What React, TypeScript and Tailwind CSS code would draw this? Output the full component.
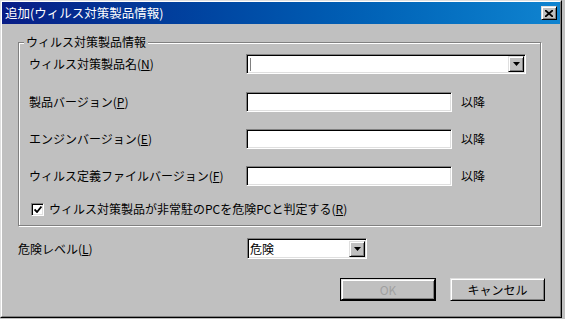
import React from "react";

const font = "font-['Noto_Sans_CJK_JP','Noto_Sans',sans-serif]";

const sunken =
    "border border-t-[#808080] border-l-[#808080] border-b-white border-r-white shadow-[inset_1px_1px_0_#000,inset_-1px_-1px_0_#dfdfdf] bg-white";
const raised =
    "border border-t-[#dfdfdf] border-l-[#dfdfdf] border-b-black border-r-black shadow-[inset_1px_1px_0_#fff,inset_-1px_-1px_0_#808080] bg-[#c0c0c0]";

function Mn({ label, k }: { label: string; k: string }) {
    return (
        <span>
            {label}(<span className="underline">{k}</span>)
        </span>
    );
}

function DropButton() {
    return (
        <div className={`${raised} w-[16px] h-[16px] flex items-center justify-center`}>
            <svg width="7" height="4" viewBox="0 0 7 4">
                <path d="M0 0h7L3.5 4z" fill="#000" />
            </svg>
        </div>
    );
}

function TextBox() {
    return <div className={`${sunken} w-[206px] h-[20px]`} />;
}

export default function App() {
    return (
        <div className={`w-[565px] h-[319px] bg-[#c0c0c0] text-[12px] text-black ${font}`}>
            {/* window frame */}
            <div className="w-[562px] h-[318px] border border-t-[#dfdfdf] border-l-[#dfdfdf] border-b-black border-r-black">
                <div className="h-full border border-t-white border-l-white border-b-[#808080] border-r-[#808080] flex flex-col">
                    {/* title bar */}
                    <div className="h-[22px] bg-gradient-to-r from-[#081c86] to-[#1084d0] flex items-center justify-between pl-[3px] pr-[3px]">
                        <span className="text-white text-[12.5px] leading-none">追加(ウィルス対策製品情報)</span>
                        <div className={`${raised} w-[16px] h-[14px] flex items-center justify-center`}>
                            <svg width="8" height="7" viewBox="0 0 8 7">
                                <path d="M0 0L8 7M8 0L0 7" stroke="#000" strokeWidth="1.8" />
                            </svg>
                        </div>
                    </div>

                    {/* body */}
                    <div className="flex flex-col pl-[16px] pt-[18px]">
                        {/* group box */}
                        <div className="relative w-[523px] h-[184px] border border-[#808080] shadow-[inset_1px_1px_0_#fff,1px_1px_0_#fff] pl-[10px] pt-[11px] flex flex-col">
                            <span className="absolute -top-[9px] left-[5px] bg-[#c0c0c0] px-[2px] leading-[16px]">
                                ウィルス対策製品情報
                            </span>

                            <div className="flex items-center h-[20px]">
                                <span className="w-[217px]">
                                    <Mn label="ウィルス対策製品名" k="N" />
                                </span>
                                <div className={`${sunken} w-[280px] h-[20px] flex items-center justify-between pl-[3px] pr-[1px]`}>
                                    <div className="w-[1px] h-[13px] bg-[#808080]" />
                                    <DropButton />
                                </div>
                            </div>

                            <div className="flex items-center h-[20px] mt-[18px]">
                                <span className="w-[217px]">
                                    <Mn label="製品バージョン" k="P" />
                                </span>
                                <TextBox />
                                <span className="ml-[9px]">以降</span>
                            </div>

                            <div className="flex items-center h-[20px] mt-[17px]">
                                <span className="w-[217px]">
                                    <Mn label="エンジンバージョン" k="E" />
                                </span>
                                <TextBox />
                                <span className="ml-[9px]">以降</span>
                            </div>

                            <div className="flex items-center h-[20px] mt-[17px]">
                                <span className="w-[217px]">
                                    <Mn label="ウィルス定義ファイルバージョン" k="F" />
                                </span>
                                <TextBox />
                                <span className="ml-[9px]">以降</span>
                            </div>

                            <div className="flex items-center h-[14px] mt-[16px] pl-[2px]">
                                <div className={`${sunken} w-[13px] h-[13px] flex items-center justify-center`}>
                                    <svg width="8" height="7" viewBox="0 0 8 7">
                                        <path d="M0.5 3.5L3 6L7.5 0.5" stroke="#000" strokeWidth="1.8" fill="none" />
                                    </svg>
                                </div>
                                <span className="ml-[5px]">
                                    <Mn label="ウィルス対策製品が非常駐のPCを危険PCと判定する" k="R" />
                                </span>
                            </div>
                        </div>

                        {/* danger level */}
                        <div className="flex items-center h-[21px] mt-[12px]">
                            <span className="w-[229px]">
                                <Mn label="危険レベル" k="L" />
                            </span>
                            <div className={`${sunken} w-[120px] h-[21px] flex items-center justify-between pl-[2px] pr-[1px]`}>
                                <span className="leading-none">危険</span>
                                <DropButton />
                            </div>
                        </div>

                        {/* buttons */}
                        <div className="flex justify-end gap-[14px] w-[527px] mt-[19px]">
                            <div className="w-[96px] h-[23px] border border-black">
                                <div className={`${raised} w-full h-full flex items-center justify-center text-[#a0a0a0]`}>
                                    OK
                                </div>
                            </div>
                            <div className={`${raised} w-[95px] h-[23px] flex items-center justify-center`}>
                                キャンセル
                            </div>
                        </div>
                    </div>
                </div>
            </div>
        </div>
    );
}
